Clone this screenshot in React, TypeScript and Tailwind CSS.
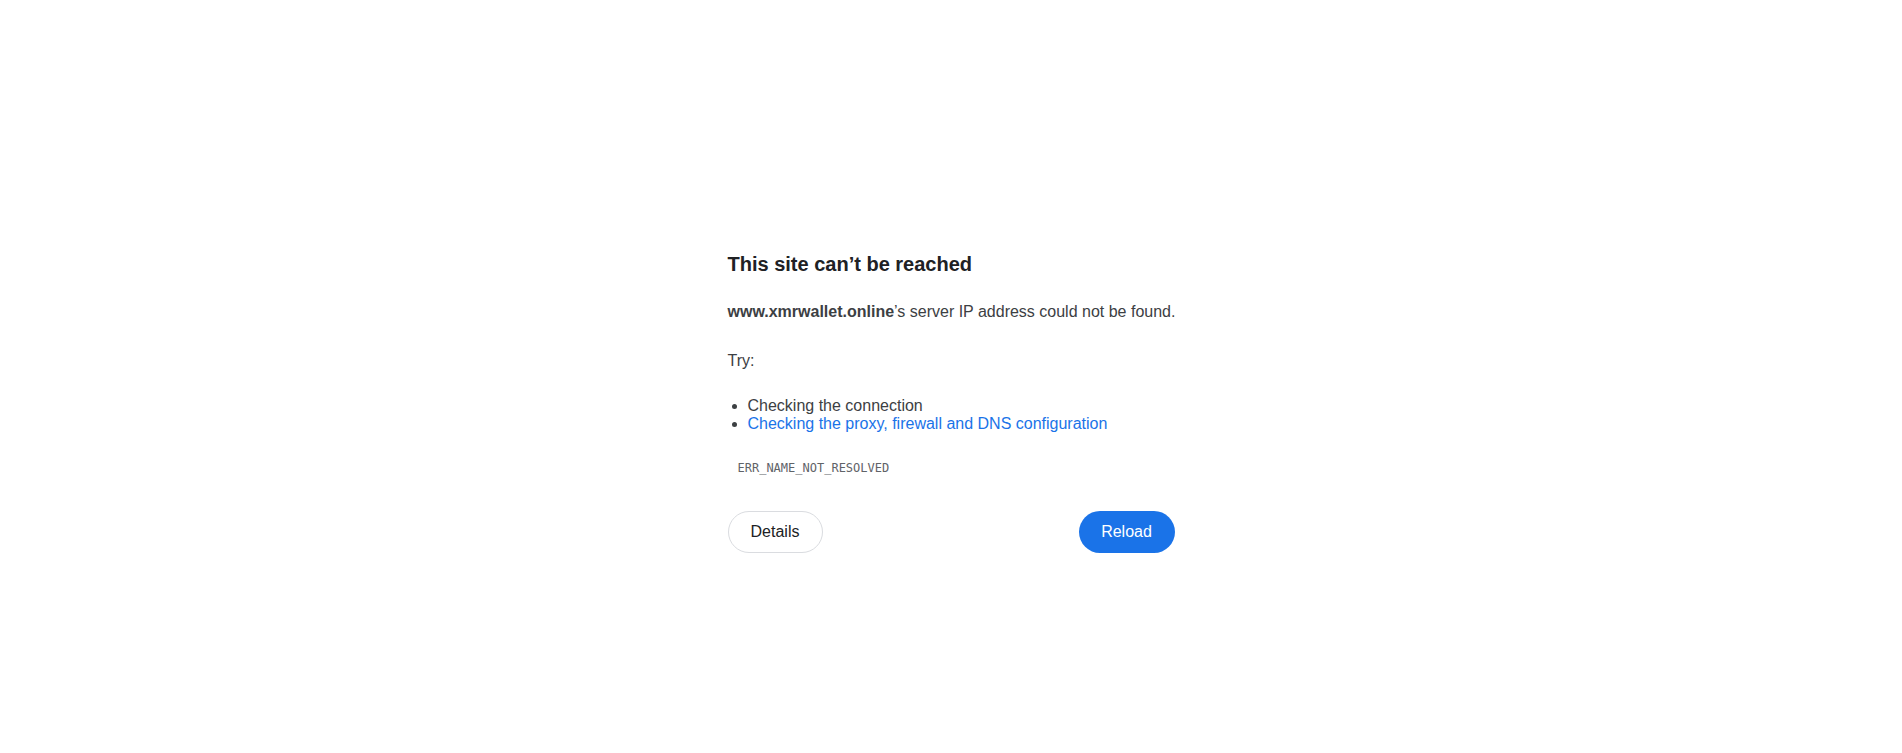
import React from 'react';

export default function App() {
  return (
    <div className="min-h-[753px] w-full bg-white flex justify-center" style={{ fontFamily: '"Liberation Sans", Arial, sans-serif' }}>
      <div className="w-[447px] pt-[252px]">
        <h1 className="text-[20px] leading-[24px] font-bold text-[#202124]">This site can’t be reached</h1>
        <p className="mt-[27px] whitespace-nowrap text-[16px] leading-[1.15] text-[#3c4043]">
          <span className="font-bold">www.xmrwallet.online</span>’s server IP address could not be found.
        </p>
        <p className="mt-[31px] text-[16px] leading-[1.15] text-[#3c4043]">Try:</p>
        <ul className="mt-[26px] pl-[20px] list-disc text-[16px] leading-[1.15] text-[#3c4043]">
          <li>Checking the connection</li>
          <li>
            <a href="#" className="text-[#1a73e8]">Checking the proxy, firewall and DNS configuration</a>
          </li>
        </ul>
        <div
          className="mt-[26px] pl-[10px] text-[12px] leading-[16px] text-[#5f6368]"
          style={{ fontFamily: '"DejaVu Sans Mono", monospace' }}
        >
          ERR_NAME_NOT_RESOLVED
        </div>
        <div className="mt-[35px] flex justify-between items-center">
          <button className="h-[42px] w-[95px] rounded-full border border-[#dadce0] bg-white text-[16px] text-[#202124]">
            Details
          </button>
          <button className="h-[42px] w-[96px] rounded-full bg-[#1a73e8] text-[16px] text-white">
            Reload
          </button>
        </div>
      </div>
    </div>
  );
}
